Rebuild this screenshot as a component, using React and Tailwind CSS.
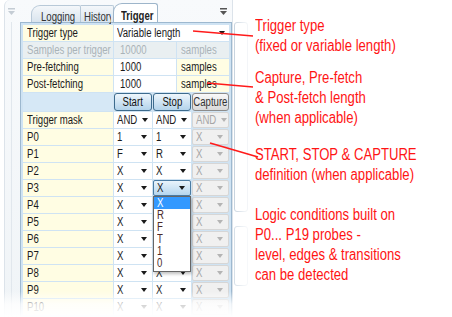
import React from 'react';

// reference text is horizontally condensed; squeeze it the same way
const T = ({ children, center, wide }) => (
  <span
    className={`inline-block whitespace-nowrap ${wide ? 'scale-x-[0.82]' : 'scale-x-[0.8]'} ${
      center ? 'origin-center' : 'origin-left'
    }`}
  >
    {children}
  </span>
);

const Arrow = ({ gray }) => (
  <svg width="6" height="4" viewBox="0 0 6 4" className="shrink-0">
    <polygon points="0,0 6,0 3,4" fill={gray ? '#b4b4b4' : '#1a1a1a'} />
  </svg>
);

const Label = ({ children, dim }) => (
  <div className={`h-4 pl-1 flex items-center overflow-hidden ${dim ? 'bg-[#e9eff1] text-[#a9b3b8]' : 'bg-[#fffde3] text-[#1b1b1b]'}`}>
    <T>{children}</T>
  </div>
);

const Value = ({ children, dim, pl = 'pl-[6px]' }) => (
  <div className={`h-4 ${pl} flex items-center overflow-hidden ${dim ? 'bg-[#e9eff1] text-[#a9b3b8]' : 'bg-white text-[#1b1b1b]'}`}>
    <T>{children}</T>
  </div>
);

const Select = ({ value, gray, focus, children }) => {
  let cls = 'bg-white text-[#1b1b1b]';
  if (gray) cls = 'bg-[#f0f0f0] text-[#a6a6a6] border border-[#d6d6d6] rounded-[2px]';
  if (focus) cls = 'bg-linear-to-b from-[#e9f4fc] to-[#b5d6ee] text-[#1b1b1b] border border-[#4b7ca3] rounded-[2px]';
  return (
    <div className={`relative h-4 pl-[3px] pr-[5px] flex items-center justify-between ${cls}`}>
      <T>{value}</T>
      <Arrow gray={gray} />
      {children}
    </div>
  );
};

const Btn = ({ children, gray }) => (
  <div
    className={`h-[18px] flex items-center justify-center overflow-hidden rounded-[3px] border ${
      gray
        ? 'border-[#8c8c8c] bg-linear-to-b from-[#f9f9f9] to-[#d9d9d9] text-[#333]'
        : 'border-[#3d6b8d] bg-linear-to-b from-[#eef6fc] to-[#b3d3eb] text-[#111]'
    }`}
  >
    <T center>{children}</T>
  </div>
);

const rows = [
  ['P0', '1', '1'],
  ['P1', 'F', 'R'],
  ['P2', 'X', 'X'],
  ['P3', 'X', 'X'],
  ['P4', 'X', 'X'],
  ['P5', 'X', 'X'],
  ['P6', 'X', 'X'],
  ['P7', 'X', 'X'],
  ['P8', 'X', 'X'],
  ['P9', 'X', 'X'],
  ['P10', 'X', 'X'],
];

const PinIcon = ({ faded }) => (
  <svg width="7" height="7" viewBox="0 0 7 7">
    <rect x="0" y="0" width="7" height="1.5" fill={faded ? '#c4ccd4' : '#555'} />
    <polygon points="0,3 7,3 3.5,7" fill={faded ? '#c4ccd4' : '#555'} />
  </svg>
);

export default function App() {
  return (
    <div className="w-[452px] h-[317px] bg-white relative overflow-hidden flex font-['Liberation_Sans',Arial,sans-serif]">
      {/* trigger window */}
      <div className="w-[237px] h-full pl-1 flex text-[12px]">
        <div className="flex-1 flex flex-col border-l border-r border-[#dce3ea] rounded-tl-md bg-linear-to-b from-[#f8fafc] to-[#f0f4f7]">
          {/* tab strip */}
          <div className="h-[22px] flex items-end pl-[1px] pr-[3px]">
            <div className="w-[25px] self-stretch flex items-center pl-[2px]">
              <PinIcon faded />
            </div>
            <div className="w-[50px] h-[17px] pl-[9px] pt-[2px] rounded-tl-[9px] rounded-tr-[2px] border border-b-0 border-[#b8c9d8] bg-linear-to-b from-[#f4f7fa] to-[#d9e4ee] text-[#333]">
              <div className="w-[34px] overflow-hidden">
                <T>Logging</T>
              </div>
            </div>
            <div className="w-[33px] h-[17px] pl-[3px] pt-[2px] rounded-tr-[2px] border border-l-0 border-b-0 border-[#b8c9d8] bg-linear-to-b from-[#f4f7fa] to-[#d9e4ee] text-[#333]">
              <div className="w-[27px] overflow-hidden">
                <T>History</T>
              </div>
            </div>
            <div className="-ml-px w-[45px] h-[19px] pl-[7px] pt-[3px] rounded-tl-[9px] rounded-tr-[3px] border border-b-0 border-[#9db5ca] bg-white font-bold text-[#222]">
              <T>Trigger</T>
            </div>
            <div className="flex-1" />
            <div className="self-stretch flex items-center pr-[2px]">
              <PinIcon />
            </div>
          </div>

          {/* body */}
          <div className="flex-1 flex pl-[6px] min-h-0">
            <div className="border-l border-[#e1e7ed] pl-[8px] flex-1 min-h-0">
              <div className="w-[212px] h-full border border-[#9db8cf] bg-[#cfe3f3] p-[2px] flex flex-col gap-px">
                <div className="grid grid-cols-[90px_62px_52px] gap-px">
                  <Label>Trigger type</Label>
                  <div className="col-span-2 h-4 bg-white pl-[3px] pr-[4px] flex items-center justify-between text-[#1b1b1b]">
                    <T>Variable length</T>
                    <Arrow />
                  </div>
                  <Label dim>Samples per trigger</Label>
                  <Value dim>10000</Value>
                  <Value dim pl="pl-[4px]">samples</Value>
                  <Label>Pre-fetching</Label>
                  <Value>1000</Value>
                  <Label>samples</Label>
                  <Label>Post-fetching</Label>
                  <Value>1000</Value>
                  <Label>samples</Label>
                </div>
                <div className="grid grid-cols-[90px_38px_38px_37px] gap-px">
                  <div className="h-[18px] bg-[#d6e8f6]" />
                  <Btn>Start</Btn>
                  <Btn>Stop</Btn>
                  <Btn gray>Capture</Btn>
                  <Label>Trigger mask</Label>
                  <Select value="AND" />
                  <Select value="AND" />
                  <Select value="AND" gray />
                  {rows.map(([p, a, b]) => (
                    <React.Fragment key={p}>
                      <Label>{p}</Label>
                      <Select value={a} />
                      {p === 'P3' ? (
                        <Select value={b} focus>
                          <div className="absolute left-[-1px] top-full mt-px z-10 w-[38px] border border-[#666] bg-white shadow-[1px_2px_3px_rgba(0,0,0,0.25)] text-[#4b2a2a] pb-[2px]">
                            {['X', 'R', 'F', 'T', '1', '0'].map((o, i) => (
                              <div
                                key={o}
                                className={`h-[12px] leading-[12px] pl-[3px] ${i === 0 ? 'bg-[#3399ff] text-white' : ''}`}
                              >
                                <T>{o}</T>
                              </div>
                            ))}
                          </div>
                        </Select>
                      ) : (
                        <Select value={b} />
                      )}
                      <Select value="X" gray />
                    </React.Fragment>
                  ))}
                </div>
              </div>
            </div>
          </div>
        </div>
      </div>

      {/* window behind, mostly faded */}
      <div className="w-[26px] h-full relative">
        <div className="h-full pt-[22px] pl-[1px] flex flex-col gap-[14px]">
          <div className="h-[190px] w-[14px] border border-[#c3d0dc] rounded-[3px]" />
          <div className="h-[60px] w-[14px] border border-[#d3dde6] rounded-[3px]" />
        </div>
        <div className="absolute inset-0 bg-linear-to-r from-white/0 via-white/70 to-white" />
      </div>

      {/* annotations */}
      <div className="flex-1 pt-[16px] text-[16px] leading-[20px] text-[#ff1414]">
        <div>
          <T wide>Trigger type</T>
          <br />
          <T wide>(fixed or variable length)</T>
        </div>
        <div className="mt-[12px]">
          <T wide>Capture, Pre-fetch</T>
          <br />
          <T wide>&amp; Post-fetch length</T>
          <br />
          <T wide>(when applicable)</T>
        </div>
        <div className="mt-[17px]">
          <T wide>START, STOP &amp; CAPTURE</T>
          <br />
          <T wide>definition (when applicable)</T>
        </div>
        <div className="mt-[20px]">
          <T wide>Logic conditions built on</T>
          <br />
          <T wide>P0... P19 probes -</T>
          <br />
          <T wide>level, edges &amp; transitions</T>
          <br />
          <T wide>can be detected</T>
        </div>
      </div>

      {/* pointer lines */}
      <svg className="absolute inset-0 pointer-events-none" width="452" height="317">
        <g stroke="#ff1a1a" strokeWidth="1.6" fill="none">
          <line x1="193" y1="31" x2="253" y2="36" />
          <line x1="207" y1="83" x2="253" y2="87" />
          <line x1="210" y1="143" x2="258" y2="157" />
        </g>
      </svg>

      {/* bottom fade */}
      <div className="absolute left-0 bottom-0 w-[263px] h-[26px] bg-linear-to-b from-white/0 via-white/80 to-white" />
    </div>
  );
}
